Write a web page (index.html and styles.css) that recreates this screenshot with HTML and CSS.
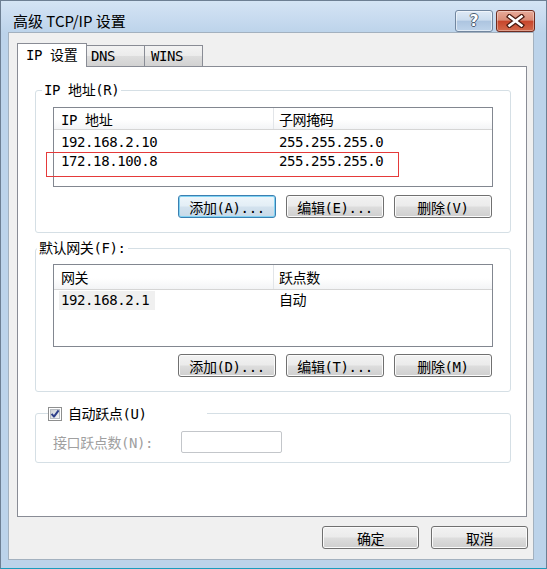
FILE: index.html
```html
<!DOCTYPE html>
<html lang="zh-CN">
<head>
<meta charset="utf-8">
<title>高级 TCP/IP 设置</title>
<link rel="stylesheet" href="styles.css">
</head>
<body>
<div class="window">
  <div class="titlebar">
    <span class="title">高级 TCP/IP 设置</span>
    <div class="caption-buttons">
      <span class="cap-btn help"><span class="help-glyph">?</span></span>
      <span class="cap-btn close">
        <svg width="19" height="14" viewBox="0 0 19 14">
          <path d="M3.5 2.5 L15.5 11.5 M15.5 2.5 L3.5 11.5" stroke="#4a1a10" stroke-width="5" stroke-linecap="square" fill="none"/>
          <path d="M3.5 2.5 L15.5 11.5 M15.5 2.5 L3.5 11.5" stroke="#ffffff" stroke-width="2.6" stroke-linecap="square" fill="none"/>
        </svg>
      </span>
    </div>
  </div>

  <div class="client">
    <div class="tabs">
      <div class="tab active">IP 设置</div>
      <div class="tab">DNS</div>
      <div class="tab last">WINS</div>
    </div>

    <div class="panel">
      <fieldset class="group group-ip">
        <legend class="legend-ip">IP 地址(R)</legend>
        <div class="list list-ip">
          <div class="list-head head-ip">
            <span class="col">IP 地址</span>
            <span class="col">子网掩码</span>
          </div>
          <div class="list-body body-ip">
            <div class="row"><span class="col">192.168.2.10</span><span class="col">255.255.255.0</span></div>
            <div class="row"><span class="col">172.18.100.8</span><span class="col">255.255.255.0</span></div>
          </div>
          <div class="mark"></div>
        </div>
        <div class="btn-row">
          <button class="btn default">添加(A)...</button>
          <button class="btn">编辑(E)...</button>
          <button class="btn">删除(V)</button>
        </div>
      </fieldset>

      <fieldset class="group group-gw">
        <legend class="legend-gw">默认网关(F):</legend>
        <div class="list list-gw">
          <div class="list-head head-gw">
            <span class="col">网关</span>
            <span class="col">跃点数</span>
          </div>
          <div class="list-body body-gw">
            <div class="row"><span class="col"><span class="selected">192.168.2.1</span></span><span class="col">自动</span></div>
          </div>
        </div>
        <div class="btn-row">
          <button class="btn">添加(D)...</button>
          <button class="btn">编辑(T)...</button>
          <button class="btn">删除(M)</button>
        </div>
      </fieldset>

      <fieldset class="group group-metric">
        <legend class="legend-metric">
          <svg class="checkbox" width="14" height="14" viewBox="0 0 14 14">
            <defs>
              <linearGradient id="boxfill" x1="0" y1="0" x2="1" y2="1">
                <stop offset="0" stop-color="#cbcfd5"/>
                <stop offset="1" stop-color="#f7f7f7"/>
              </linearGradient>
            </defs>
            <rect x="0.5" y="0.5" width="13" height="13" fill="#ffffff" stroke="#8e8f8f"/>
            <rect x="2.5" y="2.5" width="9" height="9" fill="url(#boxfill)" stroke="#b8bcc2"/>
            <path d="M3.6 6.8 L6 9.6 L10.6 3.4" stroke="#2e3f8a" stroke-width="2" fill="none" stroke-linejoin="round"/>
          </svg>
          <span class="check-label">自动跃点(U)</span>
        </legend>
        <div class="metric-row">
          <span class="metric-label">接口跃点数(N):</span>
          <span class="field"></span>
        </div>
      </fieldset>
    </div>

    <div class="dialog-buttons">
      <button class="btn wide">确定</button>
      <button class="btn wide">取消</button>
    </div>
  </div>
</div>
</body>
</html>
```

FILE: styles.css
```css
* {
  box-sizing: border-box;
}

html,
body {
  margin: 0;
  padding: 0;
}

body {
  width: 547px;
  height: 569px;
  background: #bcd3ea;
  font-family: "DejaVu Sans Mono", "Noto Sans CJK SC", monospace;
  font-size: 14px;
  letter-spacing: -0.4px;
  color: #000;
}

/* window frame */
.window {
  width: 547px;
  height: 569px;
  border: 1px solid #6d7f93;
  border-bottom-color: #1b9cbc;
  background: linear-gradient(#d4e4f4 0, #c7daef 18px, #bcd3ea 32px, #bcd3ea 100%);
  display: flex;
  flex-direction: column;
}

.titlebar {
  height: 31px;
  flex: none;
  display: flex;
  justify-content: space-between;
  align-items: flex-start;
  padding: 0 11px 0 12px;
}

.title {
  font-family: "Noto Sans CJK SC", sans-serif;
  font-size: 15px;
  letter-spacing: 0;
  line-height: 20px;
  padding-top: 10px;
}

.caption-buttons {
  display: flex;
  gap: 3px;
  margin-top: 9px;
}

.cap-btn {
  height: 22px;
  border-radius: 3px;
  display: flex;
  align-items: center;
  justify-content: center;
}

.help {
  width: 38px;
  border: 1px solid #71869f;
  background: linear-gradient(#dfeaf6 0, #cbdcee 45%, #adc5e0 52%, #bed3ea 100%);
  box-shadow: inset 0 0 0 1px rgba(255, 255, 255, 0.55);
}

.help-glyph {
  font-family: "DejaVu Sans", sans-serif;
  font-weight: bold;
  font-size: 15px;
  line-height: 16px;
  letter-spacing: 0;
  color: #fff;
  text-shadow: 1px 0 #4b5d72, -1px 0 #4b5d72, 0 1px #4b5d72, 0 -1px #4b5d72;
}

.close {
  width: 39px;
  border: 1px solid #6f2c20;
  background: linear-gradient(#e8ab9a 0, #da8c77 45%, #c7462c 52%, #d36a4c 100%);
  box-shadow: inset 0 0 0 1px rgba(255, 255, 255, 0.35);
}

/* dialog client area */
.client {
  margin: 0 12px 8px 7px;
  height: 528px;
  flex: none;
  border: 1px solid #a3b1bf;
  background: #f0f0f0;
  padding: 10px 6px 0 8px;
  display: flex;
  flex-direction: column;
}

.tabs {
  display: flex;
  align-items: flex-end;
  height: 23px;
  flex: none;
}

.tab {
  height: 21px;
  width: 58px;
  padding-left: 4px;
  line-height: 20px;
  border-top: 1px solid #898c95;
  border-right: 1px solid #898c95;
  background: linear-gradient(#f3f3f3 0, #ebebeb 50%, #dddddd 52%, #d2d2d2 100%);
}

.tab.last {
  padding-left: 6px;
}

.tab.active {
  position: relative;
  z-index: 1;
  width: 70px;
  height: 24px;
  margin-bottom: -1px;
  padding-left: 8px;
  line-height: 23px;
  border-left: 1px solid #898c95;
  background: #fff;
}

.panel {
  height: 451px;
  flex: none;
  border: 1px solid #898c95;
  background: #fff;
  padding: 0 15px 0 17px;
}

/* group boxes */
.group {
  margin: 0;
  min-inline-size: 0;
  border: 1px solid #d5dfe5;
  border-radius: 3px;
  padding: 0;
}

.group legend {
  line-height: 17px;
  height: 17px;
  padding: 0 2px;
}

.group-ip {
  margin-top: 15px;
  padding: 8px 0 14px;
}

.legend-ip {
  margin-left: 6px;
}

.group-gw {
  margin-top: 7px;
  padding: 7px 0 14px;
}

.legend-gw {
  margin-left: 1px;
}

.group-metric {
  margin-top: 13px;
  padding: 9px 0 9px;
}

.group .legend-metric {
  margin-left: 12px;
  width: 159px;
  padding: 2px 0 0;
  display: flex;
  align-items: flex-start;
  gap: 6px;
}

.checkbox {
  flex: none;
}

.check-label {
  line-height: 15px;
}

/* list views */
.list {
  position: relative;
  margin: 0 17px;
  border: 1px solid #828790;
  background: #fff;
}

.list-ip {
  height: 80px;
}

.list-gw {
  height: 83px;
}

.list-head {
  display: grid;
  grid-template-columns: 220px 1fr;
  background: linear-gradient(#ffffff 0, #ffffff 55%, #f3f4f6 100%);
  border-bottom: 1px solid #d5d5d5;
}

.head-ip {
  height: 22px;
}

.head-gw {
  height: 25px;
}

.list-head .col {
  display: flex;
  align-items: center;
}

.list-head .col:first-child {
  border-right: 1px solid #e2e5e9;
  padding-left: 7px;
}

.list-head .col:last-child {
  padding-left: 5px;
}

.body-ip {
  padding-top: 3px;
}

.body-gw {
  padding-top: 1px;
}

.row {
  display: grid;
  grid-template-columns: 220px 1fr;
  height: 19px;
  line-height: 19px;
}

.row .col:first-child {
  padding-left: 7px;
}

.row .col:last-child {
  padding-left: 5px;
}

.body-gw .row .col:first-child {
  padding-left: 5px;
}

.selected {
  display: inline-block;
  height: 19px;
  padding: 0 6px 0 2px;
  background: #f0f0f0;
}

/* red outline drawn around the second address row */
.mark {
  position: absolute;
  left: -8px;
  top: 44px;
  width: 353px;
  height: 25px;
  border: 1px solid #e53a3a;
}

/* push buttons */
.btn-row {
  display: flex;
  justify-content: flex-end;
  gap: 10px;
  margin: 8px 18px 0 17px;
}

.group-gw .btn-row {
  margin-top: 7px;
}

.btn {
  width: 98px;
  height: 23px;
  padding: 0;
  border: 1px solid #707070;
  border-radius: 3px;
  background: linear-gradient(#f2f2f2 0, #ebebeb 48%, #dddddd 52%, #cfcfcf 100%);
  box-shadow: inset 0 0 0 1px #fbfbfb;
  font: inherit;
  letter-spacing: inherit;
  color: #000;
  display: flex;
  align-items: center;
  justify-content: center;
}

.btn.default {
  border-color: #3c7fb1;
  background: linear-gradient(#eef6fb 0, #e3eef6 48%, #d3e2ee 52%, #c7d9e8 100%);
  box-shadow: inset 0 0 0 1px #7fd2f3;
}

.dialog-buttons {
  display: flex;
  justify-content: flex-end;
  gap: 12px;
  margin: 9px -1px 0 0;
}

.btn.wide {
  width: 97px;
}

/* interface metric row */
.metric-row {
  display: flex;
  align-items: center;
  margin: 0 17px;
}

.metric-label {
  flex: 0 0 128px;
  color: #a0a0a0;
}

.field {
  width: 101px;
  height: 22px;
  border: 1px solid #c3c6ca;
  border-radius: 2px;
  background: #fff;
}
```
